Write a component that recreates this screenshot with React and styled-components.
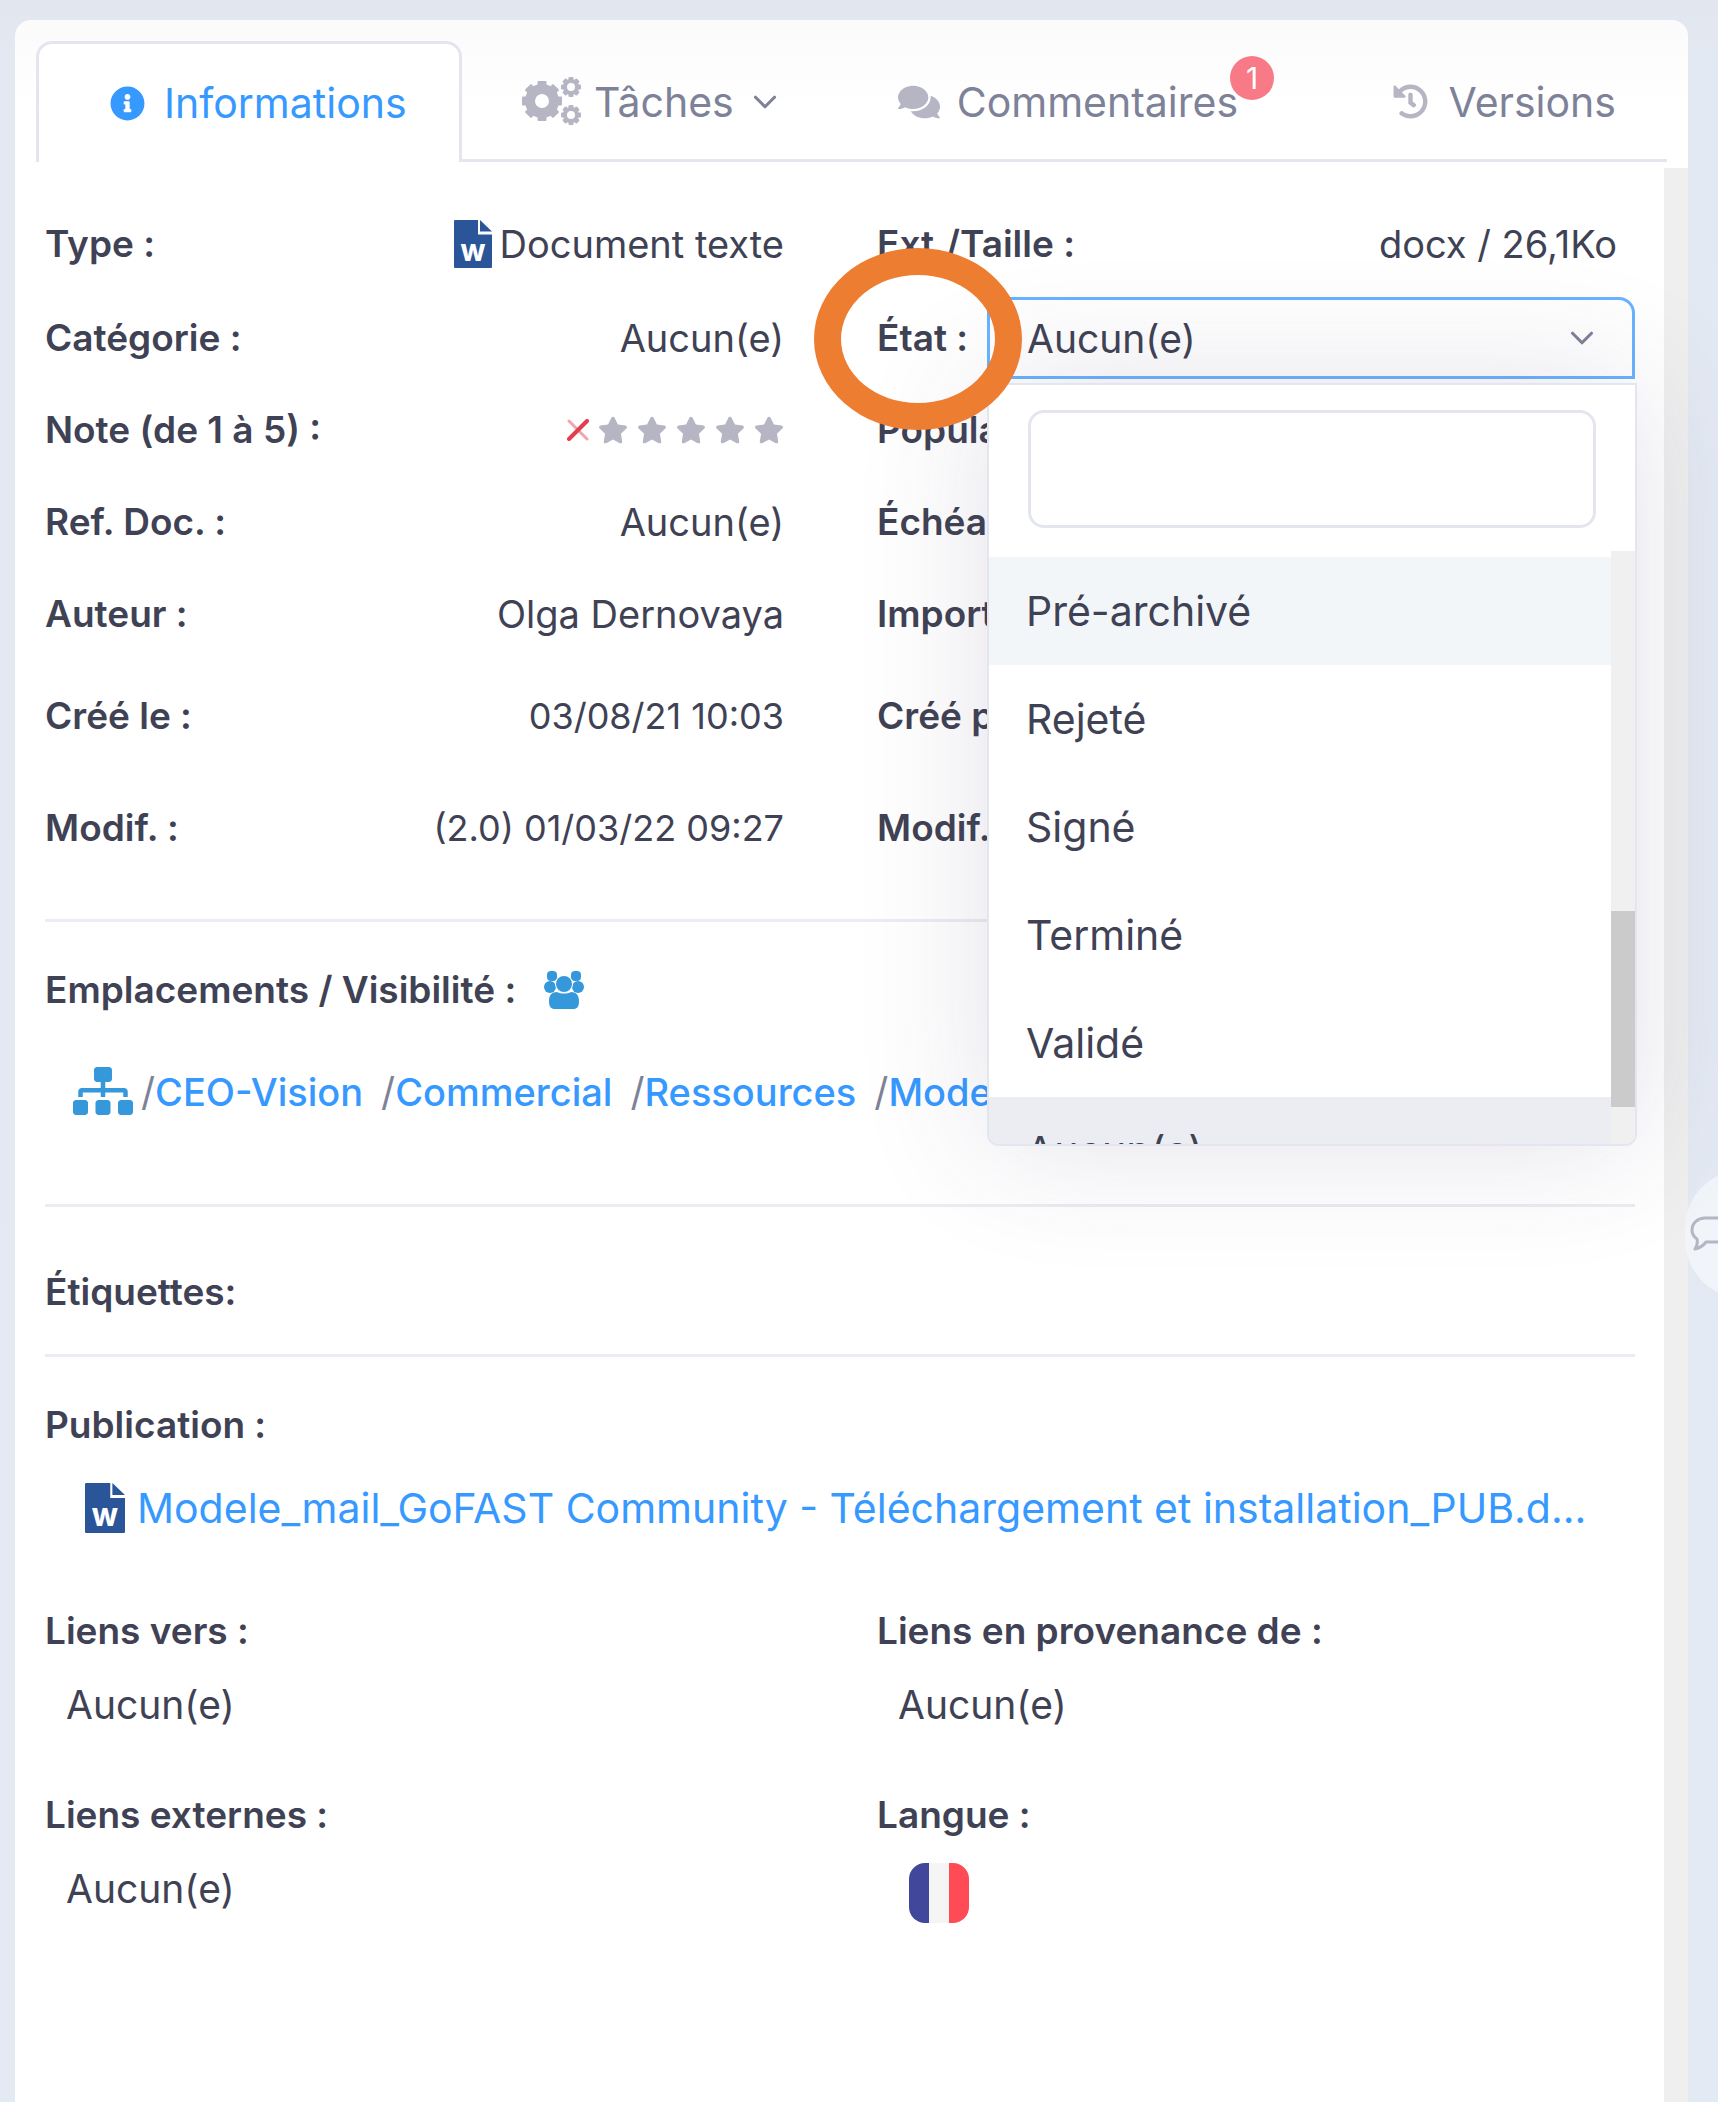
import React from 'react';
import styled, { createGlobalStyle, css } from 'styled-components';
import { FaInfoCircle, FaComments, FaHistory, FaStar, FaSitemap } from 'react-icons/fa';
import { FiChevronDown } from 'react-icons/fi';

const ink = '#3f4254';
const muted = '#7e8299';
const iconGrey = '#b5b5c3';
const blue = '#3699ff';
const deepBlue = '#3498db';
const line = '#e4e6ef';

const GlobalStyle = createGlobalStyle`
  *, *::before, *::after { box-sizing: border-box; }
  body { margin: 0; background: #e4e9f2; }
  body, button, input, select {
    font-family: Inter, "Open Sans", "Liberation Sans", sans-serif;
    font-size: 39px;
    color: ${ink};
  }
`;

const Page = styled.div`
  position: relative;
  display: flex;
  min-height: 100vh;
  padding: 20px 30px 0 15px;
  overflow: hidden;
  background: linear-gradient(180deg, #e2e6ef 0, #e3e9f2 60px, #e4eaf3 100%);
`;

const Card = styled.main`
  flex: 1;
  min-width: 0;
  display: flex;
  flex-direction: column;
  border-radius: 16px 16px 0 0;
  background: linear-gradient(180deg, #fbfbfb 0, #fff 90px);
`;

const Tabs = styled.nav`
  display: flex;
  height: 142px;
  margin: 0 21px;
  padding-top: 21px;
  border-bottom: 3px solid ${line};
`;

const Tab = styled.button`
  position: relative;
  display: flex;
  align-items: center;
  gap: ${p => p.$gap}px;
  height: 121px;
  padding: 0 54px 0 60px;
  border: 0;
  background: none;
  color: ${muted};
  font-size: 41px;
  svg { color: ${iconGrey}; flex: none; }
  &:last-child { margin-left: auto; padding-right: 51px; }
  ${p => p.$active && css`
    min-width: 426px;
    padding: 0 48px 0 71px;
    border: 3px solid ${line};
    border-bottom: 0;
    border-radius: 16px 16px 0 0;
    background: #fff;
    color: ${blue};
    svg { color: ${blue}; }
  `}
`;

const Badge = styled.span`
  position: absolute;
  top: 15px;
  right: 18px;
  width: 44px;
  height: 44px;
  border-radius: 50%;
  background: #f97a87;
  color: #fff;
  font-size: 30px;
  line-height: 44px;
  text-align: center;
`;

const Arrow = styled(FiChevronDown)`
  && { color: ${muted}; }
`;

const Body = styled.div`
  flex: 1;
  display: flex;
  margin-top: 6px;
`;

const Content = styled.div`
  flex: 1;
  min-width: 0;
  padding: 30px 29px 40px 30px;
`;

const PageTrack = styled.div`
  width: 24px;
  background: #efefef;
`;

const Grid = styled.div`
  display: grid;
  grid-template-columns: 832fr 758fr;
`;

const Details = styled(Grid)`
  grid-template-rows: 94px;
  margin-bottom: 35px;
`;

const Cell = styled.div`
  position: relative;
  display: flex;
  align-items: center;
  justify-content: space-between;
  height: ${p => (p.$tall ? 112 : 92)}px;
  padding-right: ${p => (p.$field ? 0 : p.$left ? 93 : 18)}px;
`;

const Label = styled.span`
  position: relative;
  font-size: 37px;
  font-weight: 600;
  line-height: 46px;
  white-space: nowrap;
`;

const FieldLabel = styled(Label).attrs({ as: 'label' })`
  width: 110px;
`;

const Value = styled.span`
  display: flex;
  align-items: center;
  gap: 8px;
  font-size: ${p => (p.$compact ? 36 : 38)}px;
  line-height: 46px;
  white-space: nowrap;
`;

const Highlight = styled.span`
  position: absolute;
  z-index: 5;
  top: -67px;
  left: -63px;
  width: 208px;
  height: 182px;
  border: 27px solid #ed7d31;
  border-radius: 50%;
  pointer-events: none;
`;

const Rating = styled.span`
  display: flex;
  align-items: center;
  gap: 9px;
`;

const RateButton = styled.button`
  display: flex;
  padding: 0;
  border: 0;
  background: none;
  color: ${iconGrey};
`;

const Picker = styled.div`
  position: relative;
  flex: 1;
  display: flex;
  align-items: center;
`;

const Select = styled.select`
  appearance: none;
  width: 100%;
  height: 82px;
  padding: 0 80px 0 37px;
  border: 3px solid #69b3ff;
  border-radius: 0 16px 0 0;
  background: #fff;
`;

const PickerArrow = styled(FiChevronDown)`
  position: absolute;
  right: 34px;
  color: ${muted};
`;

const Dropdown = styled.div`
  position: absolute;
  z-index: 3;
  top: 100%;
  left: 0;
  right: -2px;
  margin-top: 4px;
  border: 2px solid ${line};
  border-radius: 0 0 12px 12px;
  background: #fff;
  box-shadow: 0 0 130px rgba(82, 63, 105, 0.16);
  overflow: hidden;
`;

const Search = styled.input`
  display: block;
  width: calc(100% - 78px);
  height: 118px;
  margin: 25px 39px 23px;
  padding: 0 24px;
  border: 3px solid ${line};
  border-radius: 16px;
  outline: 0;
`;

const ListArea = styled.div`
  display: flex;
  height: 593px;
`;

const Options = styled.ul`
  flex: 1;
  margin: 0;
  padding: 6px 0 0;
  list-style: none;
  overflow: hidden;
`;

const Option = styled.li`
  height: 108px;
  padding: 0 37px;
  font-size: 41px;
  line-height: 108px;
  background: ${p => (p.$tone === 'hover' ? '#f3f6f9' : p.$tone === 'active' ? '#ebedf3' : '#fff')};
`;

const Track = styled.div`
  width: 24px;
  padding-top: 360px;
  background: #f0f0f0;
`;

const Thumb = styled.div`
  height: 196px;
  background: #cbcbcb;
`;

const Rule = styled.hr`
  height: 3px;
  margin: 0;
  border: 0;
  background: #ebedf3;
`;

const Section = styled.section`
  display: flex;
  flex-direction: column;
  align-items: flex-start;
  gap: ${p => p.$gap || 0}px;
  padding: ${p => p.$top}px 0 ${p => p.$bottom}px;
`;

const Heading = styled.h2`
  display: flex;
  align-items: center;
  gap: 28px;
  margin: 0;
  font-size: 37px;
  font-weight: 600;
  line-height: 46px;
`;

const Crumbs = styled.div`
  display: flex;
  align-items: center;
  padding-left: 28px;
  height: 56px;
  white-space: nowrap;
  svg { margin-right: 8px; }
`;

const Crumb = styled.span`
  margin-right: 18px;
  color: ${muted};
`;

const Link = styled.a`
  color: ${blue};
  font-size: ${p => (p.$strong ? 38 : 41)}px;
  font-weight: ${p => (p.$strong ? 500 : 400)};
  text-decoration: none;
`;

const FileRow = styled.div`
  display: flex;
  align-items: center;
  gap: 12px;
  height: 56px;
  padding-left: 40px;
  white-space: nowrap;
`;

const LinkBlock = styled.div`
  height: 184px;
`;

const LinkValue = styled.div`
  margin-top: 28px;
  padding-left: 21px;
  line-height: 46px;
`;

const Flag = styled.div`
  width: 60px;
  height: 60px;
  margin: 25px 0 0 32px;
  border-radius: 16px;
  background: linear-gradient(90deg, #41479b 0 33%, #f5f5f5 33% 67%, #ff4b55 67%);
`;

const ChatTab = styled.button`
  position: absolute;
  top: 1169px;
  right: -87px;
  display: flex;
  align-items: center;
  width: 120px;
  height: 130px;
  padding: 0 0 0 5px;
  border: 0;
  border-radius: 60px;
  background: #f1f5f9;
`;

function WordIcon({ width, height }) {
  return (
    <svg width={width} height={height} viewBox="0 0 38 50" preserveAspectRatio="none" aria-hidden="true">
      <path d="M1 0h23v15h14v34a1 1 0 0 1-1 1H1a1 1 0 0 1-1-1V1a1 1 0 0 1 1-1z" fill="#2a5699" />
      <path d="M26 0l12 12H26z" fill="#2a5699" />
      <text x="19" y="43" textAnchor="middle" fontFamily="Inter, sans-serif" fontWeight="800" fontSize="24" fill="#fff">W</text>
    </svg>
  );
}

function Gear({ x, y, r, tooth, ring, body }) {
  return (
    <g transform={`translate(${x} ${y})`}>
      <circle r={body} fill="none" stroke="currentColor" strokeWidth={ring} />
      {[0, 45, 90, 135, 180, 225, 270, 315].map(angle => (
        <rect key={angle} x={-tooth / 2} y={-r} width={tooth} height={r - body} rx="1" fill="currentColor" transform={`rotate(${angle})`} />
      ))}
    </g>
  );
}

function GearsIcon() {
  return (
    <svg width="60" height="50" viewBox="0 0 60 50" aria-hidden="true">
      <Gear x={20} y={24} r={20} tooth={9} body={12} ring={10} />
      <Gear x={49} y={10} r={10} tooth={5} body={6} ring={4} />
      <Gear x={49} y={38} r={10} tooth={5} body={6} ring={4} />
    </svg>
  );
}

function PeopleIcon() {
  return (
    <svg width="40" height="38" viewBox="0 0 40 38" fill={deepBlue} aria-hidden="true">
      <rect x="3" y="0" width="10" height="10" rx="4" />
      <rect x="27" y="0" width="10" height="10" rx="4" />
      <circle cx="6" cy="16" r="6" />
      <circle cx="34" cy="16" r="6" />
      <circle cx="20" cy="13" r="9" fill="#fff" />
      <circle cx="20" cy="13" r="8" />
      <path d="M5 30c0-6 3-9 8-9 4 2 10 2 14 0 5 0 8 3 8 9 0 6-2 8-6 8H11c-4 0-6-2-6-8z" />
    </svg>
  );
}

function CrossIcon() {
  return (
    <svg width="22" height="22" viewBox="0 0 22 22" strokeLinecap="round" aria-hidden="true">
      <path d="M2 2l18 18" stroke="#f5a3ae" strokeWidth="3" />
      <path d="M20 2L2 20" stroke="#e43d50" strokeWidth="4" />
    </svg>
  );
}

function BubbleIcon() {
  return (
    <svg width="48" height="36" viewBox="0 0 48 36" fill="none" stroke="#b5b5c3" strokeWidth="3" strokeLinejoin="round" aria-hidden="true">
      <path d="M15 2h18c7 0 12 5 12 12s-5 12-12 12H16c-3 4-6 6-11 7 2-3 3-6 2-10-3-2-5-5-5-9C2 7 8 2 15 2z" />
    </svg>
  );
}

const options = [
  ['Pré-archivé', 'hover'],
  ['Rejeté'],
  ['Signé'],
  ['Terminé'],
  ['Validé'],
  ['Aucun(e)', 'active'],
];

const crumbs = ['CEO-Vision', 'Commercial', 'Ressources', 'Modeles'];

function Info({ label, children, left, tall }) {
  return (
    <Cell $left={left} $tall={tall}>
      <Label>{label}</Label>
      <Value $compact={tall}>{children}</Value>
    </Cell>
  );
}

function StatePicker() {
  return (
    <Cell $field>
      <FieldLabel htmlFor="etat">
        État :
        <Highlight />
      </FieldLabel>
      <Picker>
        <Select id="etat" defaultValue="Aucun(e)">
          {options.map(([name]) => <option key={name}>{name}</option>)}
        </Select>
        <PickerArrow size={38} />
        <Dropdown>
          <Search type="text" aria-label="Rechercher un état" />
          <ListArea>
            <Options role="listbox">
              {options.map(([name, tone]) => (
                <Option key={name} role="option" aria-selected={tone === 'active'} $tone={tone}>{name}</Option>
              ))}
            </Options>
            <Track><Thumb /></Track>
          </ListArea>
        </Dropdown>
      </Picker>
    </Cell>
  );
}

export default function App() {
  return (
    <>
      <GlobalStyle />
      <Page>
        <Card>
          <Tabs>
            <Tab $active $gap={19}><FaInfoCircle size={35} />Informations</Tab>
            <Tab $gap={12}><GearsIcon />Tâches<Arrow size={38} /></Tab>
            <Tab $gap={17}><FaComments size={42} />Commentaires<Badge>1</Badge></Tab>
            <Tab $gap={20}><FaHistory size={35} />Versions</Tab>
          </Tabs>
          <Body>
            <Content>
              <Details>
                <Info left label="Type :"><WordIcon width={38} height={48} />Document texte</Info>
                <Info label="Ext./Taille :">docx / 26,1Ko</Info>
                <Info left label="Catégorie :">Aucun(e)</Info>
                <StatePicker />
                <Info left label="Note (de 1 à 5) :">
                  <Rating>
                    <RateButton aria-label="Effacer la note"><CrossIcon /></RateButton>
                    {[1, 2, 3, 4, 5].map(n => (
                      <RateButton key={n} aria-label={`Note ${n}`}><FaStar size={30} /></RateButton>
                    ))}
                  </Rating>
                </Info>
                <Info label="Popularité :" />
                <Info left label="Ref. Doc. :">Aucun(e)</Info>
                <Info label="Échéance :" />
                <Info left label="Auteur :">Olga Dernovaya</Info>
                <Info label="Importance :" />
                <Info left tall label="Créé le :">03/08/21 10:03</Info>
                <Info tall label="Créé par :" />
                <Info left tall label="Modif. :">(2.0) 01/03/22 09:27</Info>
                <Info tall label="Modif. par :" />
              </Details>
              <Rule />
              <Section $top={45} $bottom={85} $gap={50}>
                <Heading>Emplacements / Visibilité : <PeopleIcon /></Heading>
                <Crumbs>
                  <FaSitemap size={60} color={deepBlue} />
                  {crumbs.map(name => (
                    <Crumb key={name}>/<Link $strong href="#">{name}</Link></Crumb>
                  ))}
                </Crumbs>
              </Section>
              <Rule />
              <Section $top={62} $bottom={39}>
                <Heading>Étiquettes:</Heading>
              </Section>
              <Rule />
              <Section $top={45} $bottom={70} $gap={32}>
                <Heading>Publication :</Heading>
                <FileRow>
                  <WordIcon width={40} height={50} />
                  <Link href="#">Modele_mail_GoFAST Community - Téléchargement et installation_PUB.d...</Link>
                </FileRow>
              </Section>
              <Grid>
                <LinkBlock><Label>Liens vers :</Label><LinkValue>Aucun(e)</LinkValue></LinkBlock>
                <LinkBlock><Label>Liens en provenance de :</Label><LinkValue>Aucun(e)</LinkValue></LinkBlock>
                <LinkBlock><Label>Liens externes :</Label><LinkValue>Aucun(e)</LinkValue></LinkBlock>
                <LinkBlock><Label>Langue :</Label><Flag role="img" aria-label="Français" /></LinkBlock>
              </Grid>
            </Content>
            <PageTrack />
          </Body>
        </Card>
        <ChatTab aria-label="Discussion"><BubbleIcon /></ChatTab>
      </Page>
    </>
  );
}
